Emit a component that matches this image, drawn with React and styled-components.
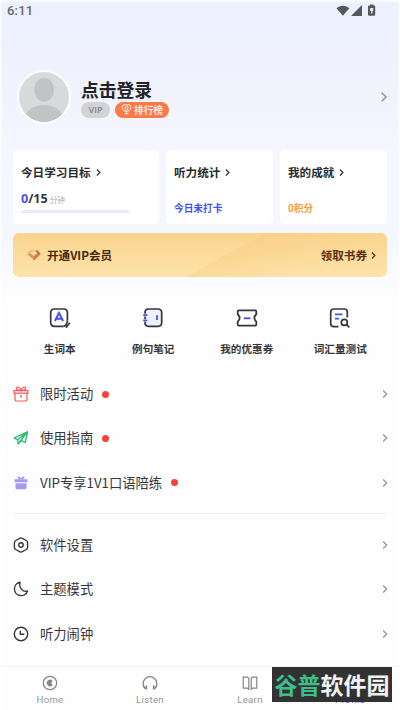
import React from 'react';
import styled, { createGlobalStyle } from 'styled-components';

const cjk = "'Noto Sans CJK SC', sans-serif";

const Chevron = ({ size = 8, color = '#999', weight = 1.4 }) => (
  <svg width={size} height={size} viewBox="0 0 8 8" fill="none" stroke={color} strokeWidth={weight}>
    <path d="M2.2 0.6 5.6 4 2.2 7.4" />
  </svg>
);

const StatusIcons = () => (
  <svg width="42" height="14" viewBox="0 0 42 14" fill="#56585f">
    <path d="M0.5 4.2C3.8 0.8 10 0.8 13.3 4.2L6.9 11.8Z" />
    <path d="M26 1V12H15Z" />
    <path d="M34 1.5V0.6H37.5V1.5H38.2Q39.2 1.5 39.2 2.5V10.6Q39.2 11.8 38 11.8H33.2Q32 11.8 32 10.6V2.5Q32 1.5 33 1.5Z" />
    <path d="M34.2 4H37.2V7H36.4V9.5H35.2V7H34.2Z" fill="#eef0fe" />
  </svg>
);

const AvatarIcon = () => (
  <svg width="50" height="50" viewBox="0 0 50 50">
    <circle cx="25" cy="25" r="25" fill="#d9dadb" />
    <ellipse cx="25.2" cy="17.8" rx="10" ry="11.8" fill="#c2c3c4" />
    <path d="M7 42.3C10 36.5 17 33 25 33s15 3.500 18 9.300A25 25 0 0 1 7 42.300Z" fill="#c2c3c4" />
  </svg>
);

const MedalIcon = () => (
  <svg width="11" height="11" viewBox="0 0 11 11" fill="none" stroke="#fff" strokeWidth="0.9">
    <path d="M2 0.9H9L10.200 3.300 8 7H3L0.800 3.300Z" />
    <circle cx="5.500" cy="3.900" r="1.500" />
    <path d="M5.500 7V9.500M3.500 9.800H7.500" />
  </svg>
);

const DiamondIcon = () => (
  <svg width="14" height="11" viewBox="0 0 14 11">
    <path d="M3.300 0.500H10.700L13.700 4 7 10.500 0.300 4Z" fill="#d99860" />
    <path d="M3.300 0.500H5.800L4.500 4H0.300Z" fill="#eab987" />
    <path d="M8.500 0.500H10.700L13.700 4H9.700Z" fill="#b9723f" />
    <path d="M3.900 3.200 7 6.100 10.100 3.200 8.800 1.200H5.200Z" fill="#fbe0ae" />
    <path d="M7 6.100 10.300 3.500 13.700 4 7 10.500Z" fill="#c9824a" />
  </svg>
);

const WordBookIcon = () => (
  <svg width="24" height="24" viewBox="0 0 24 24" fill="none" stroke="#36373c" strokeWidth="1.7">
    <path d="M15.500 20.300H6.500Q2.700 20.300 2.700 16.500V6.800Q2.700 3 6.500 3H15.600Q19.400 3 19.400 6.800V14.800" />
    <path d="M15.500 20.300Q18.800 19.600 19.400 14.800M18 21.800 21.800 16.800" />
    <path d="M6.900 15 11 6.900 15.100 15M8.700 12.700H13.300" stroke="#4450ef" strokeWidth="2" />
  </svg>
);

const NotesIcon = () => (
  <svg width="24" height="24" viewBox="0 0 24 24" fill="none" stroke="#36373c" strokeWidth="1.7">
    <path d="M4 7.800V6.500Q4 3 7.500 3H17Q20.700 3 20.700 6.700V16.600Q20.700 20.300 17 20.300H7.500Q4 20.300 4 16.800V15.500M4 10.500V13" fill="#edf0fe" />
    <path d="M2.200 9.100H6.300M2.200 14.300H6.300M16 9.200V14" stroke="#4450ef" strokeWidth="1.800" />
  </svg>
);

const CouponIcon = () => (
  <svg width="24" height="24" viewBox="0 0 24 24" fill="none" stroke="#36373c" strokeWidth="1.800">
    <path d="M3.800 4.300H20.200Q21.300 4.300 21.300 5.400V8.300C18.700 10.500 18.700 13.500 21.300 15.700V18.400Q21.300 19.600 20.200 19.600H3.800Q2.700 19.600 2.700 18.400V15.700C5.300 13.500 5.300 10.500 2.700 8.300V5.400Q2.700 4.300 3.800 4.300Z" />
    <path d="M8.800 12.300H15.500" stroke="#4450ef" />
  </svg>
);

const TestIcon = () => (
  <svg width="24" height="24" viewBox="0 0 24 24" fill="none" stroke="#36373c" strokeWidth="1.700">
    <path d="M10.500 20.700H5.800Q2.700 20.700 2.700 17.600V6.100Q2.700 3 5.800 3H16.200Q19.300 3 19.300 6.100V11.500" />
    <circle cx="16.300" cy="16.400" r="3" />
    <path d="M18.500 18.600 21.300 21.300" />
    <path d="M7 8.300H14.500M7 12.700H11" stroke="#4450ef" />
  </svg>
);

const GiftIcon = () => (
  <svg width="16" height="16" viewBox="0 0 16 16" fill="none" stroke="#f5585c" strokeWidth="1.200">
    <path d="M1 4.700H15V7.200H1ZM2 7.200V13.400Q2 15 3.600 15H12.400Q14 15 14 13.400V7.200" />
    <path d="M8 4.500C5.500 4.500 3.100 3.600 3.400 2.100 3.800 0.300 7 0.700 8 4.500 9 0.700 12.200 0.300 12.600 2.100 12.900 3.600 10.500 4.500 8 4.500ZM8 8.800V12" />
  </svg>
);

const PlaneIcon = () => (
  <svg width="16" height="16" viewBox="0 0 16 16" fill="none" stroke="#2dbd78" strokeWidth="1.400" strokeLinejoin="round">
    <path d="M0.900 8.200 14.500 1.800 12.200 12.300 8.400 10.700M0.900 8.200 4.600 9.700 14.500 1.800 5.200 13.800 4.600 9.700M5.200 13.800 8.400 10.700" />
  </svg>
);

const SolidGiftIcon = () => (
  <svg width="16" height="16" viewBox="0 0 16 16" fill="#a799f2">
    <path d="M1.500 4.300H14.500V7.200H1.500ZM2.500 8.200H13.500V13.200Q13.500 14.300 12.400 14.300H3.600Q2.500 14.300 2.500 13.200Z" />
    <path d="M8 4.300C5 4.300 4 3 4.600 2 5.500 1 7.200 2 8 3.500 8.800 2 10.500 1 11.400 2 12 3 11 4.300 8 4.300Z" />
  </svg>
);

const SettingsIcon = () => (
  <svg width="16" height="16" viewBox="0 0 16 16" fill="none" stroke="#36373c" strokeWidth="1.400">
    <path d="M6.600 1.300Q8 0.500 9.400 1.300L13.300 3.500Q14.600 4.300 14.600 5.800V10.200Q14.600 11.700 13.300 12.500L9.400 14.700Q8 15.500 6.600 14.700L2.700 12.500Q1.400 11.700 1.400 10.200V5.800Q1.400 4.300 2.700 3.500Z" />
    <circle cx="8" cy="8" r="2.200" />
  </svg>
);

const MoonIcon = () => (
  <svg width="16" height="16" viewBox="0 0 16 16" fill="none" stroke="#36373c" strokeWidth="1.400" strokeLinejoin="round">
    <path d="M7 1.300A6.700 6.700 0 1 0 14.500 10C10 11.500 5.500 7 7 1.300Z" />
  </svg>
);

const ClockIcon = () => (
  <svg width="16" height="16" viewBox="0 0 16 16" fill="none" stroke="#36373c" strokeWidth="1.400">
    <circle cx="8" cy="8" r="6.700" />
    <path d="M7.300 4.700V8.300H11.300" />
  </svg>
);

const HomeIcon = () => (
  <svg width="16" height="16" viewBox="0 0 16 16" fill="none" stroke="#84858a" strokeWidth="1.200">
    <circle cx="8" cy="8" r="6.700" />
    <path d="M10.600 5.800A3.300 3.300 0 1 0 10.600 10.200L9.300 8Z" fill="#84858a" stroke="none" />
  </svg>
);

const ListenIcon = () => (
  <svg width="16" height="16" viewBox="0 0 16 16" fill="none" stroke="#84858a" strokeWidth="1.300">
    <path d="M3.600 13.700Q1.200 12.500 1.200 8.500A6.800 6.800 0 0 1 14.800 8.500Q14.800 12.500 12.400 13.700" />
    <path d="M4.300 10.500V14.500M11.700 10.500V14.500" strokeWidth="1.700" />
  </svg>
);

const LearnIcon = () => (
  <svg width="16" height="16" viewBox="0 0 16 16" fill="none" stroke="#84858a" strokeWidth="1.200">
    <path d="M1.200 2.200H5.500L6.800 3.200V14.200L5.500 13.200H1.200ZM14.800 2.200H10.500L9.200 3.200V14.200L10.500 13.200H14.800Z" />
  </svg>
);

const ProfileIcon = () => (
  <svg width="16" height="16" viewBox="0 0 16 16" fill="none" stroke="#4450ef" strokeWidth="1.200">
    <circle cx="8" cy="5" r="3.300" />
    <path d="M2 15Q2 9.500 8 9.500T14 15" />
  </svg>
);

const shortcuts = [
  { label: '生词本', icon: <WordBookIcon /> },
  { label: '例句笔记', icon: <NotesIcon /> },
  { label: '我的优惠券', icon: <CouponIcon /> },
  { label: '词汇量测试', icon: <TestIcon /> },
];

const promoRows = [
  { label: '限时活动', icon: <GiftIcon />, dot: true },
  { label: '使用指南', icon: <PlaneIcon />, dot: true },
  { label: 'VIP专享1V1口语陪练', icon: <SolidGiftIcon />, dot: true },
];

const settingRows = [
  { label: '软件设置', icon: <SettingsIcon /> },
  { label: '主题模式', icon: <MoonIcon /> },
  { label: '听力闹钟', icon: <ClockIcon /> },
];

const tabs = [
  { label: 'Home', icon: <HomeIcon /> },
  { label: 'Listen', icon: <ListenIcon /> },
  { label: 'Learn', icon: <LearnIcon /> },
  { label: 'Profile', icon: <ProfileIcon />, active: true },
];

const MenuList = ({ rows }) => (
  <Menu>
    {rows.map((row) => (
      <MenuRow key={row.label}>
        {row.icon}
        <MenuLabel>{row.label}</MenuLabel>
        {row.dot && <Dot />}
        <MenuArrow><Chevron /></MenuArrow>
      </MenuRow>
    ))}
  </Menu>
);

const App = () => (
  <>
    <GlobalStyle />
    <Screen>
      <StatusBar>
        <span>6:11</span>
        <StatusIcons />
      </StatusBar>

      <Profile>
        <Avatar><AvatarIcon /></Avatar>
        <ProfileInfo>
          <ProfileName>点击登录</ProfileName>
          <Badges>
            <VipBadge>VIP</VipBadge>
            <RankBadge><MedalIcon />排行榜</RankBadge>
          </Badges>
        </ProfileInfo>
        <Chevron size={10} />
      </Profile>

      <Stats>
        <StatCard>
          <StatTitle>今日学习目标<Chevron size={7} color="#333" /></StatTitle>
          <Goal><GoalDone>0</GoalDone>/15<GoalUnit>分钟</GoalUnit></Goal>
          <GoalTrack />
        </StatCard>
        <StatCard>
          <StatTitle>听力统计<Chevron size={7} color="#333" /></StatTitle>
          <StatNote $color="#4450ef">今日未打卡</StatNote>
        </StatCard>
        <StatCard>
          <StatTitle>我的成就<Chevron size={7} color="#333" /></StatTitle>
          <StatNote $color="#f79a35">0积分</StatNote>
        </StatCard>
      </Stats>

      <Banner>
        <DiamondIcon />
        <BannerTitle>开通VIP会员</BannerTitle>
        <BannerAction>领取书券<Chevron size={7} color="#5a2e16" /></BannerAction>
      </Banner>

      <Shortcuts>
        {shortcuts.map((item) => (
          <Shortcut key={item.label}>
            {item.icon}
            <ShortcutLabel>{item.label}</ShortcutLabel>
          </Shortcut>
        ))}
      </Shortcuts>

      <MenuList rows={promoRows} />
      <Divider />
      <MenuList rows={settingRows} />

      <TabBar>
        {tabs.map((tab) => (
          <Tab key={tab.label} $active={tab.active}>
            {tab.icon}
            {tab.label}
          </Tab>
        ))}
        <SiteMark><SiteMarkAccent>谷普</SiteMarkAccent>软件园</SiteMark>
      </TabBar>
    </Screen>
  </>
);

const GlobalStyle = createGlobalStyle`
  * {
    box-sizing: border-box;
  }

  body {
    margin: 0;
    background: #fff;
  }

  svg {
    display: block;
    flex: none;
  }
`;

const Screen = styled.div`
  display: flex;
  flex-direction: column;
  width: 400px;
  height: 710px;
  overflow: hidden;
  color: #36373c;
  font-family: ${cjk};
  background: linear-gradient(180deg, #fff 0, #edf0fe 3px, #eef0fe 50px, #f5f6ff 150px, #f5f7ff 240px, #fefeff 300px, #fefefe 320px);
  border-left: 2px solid rgba(255, 255, 255, 0.6);
  border-right: 2px solid rgba(255, 255, 255, 0.6);
`;

const StatusBar = styled.header`
  display: flex;
  justify-content: space-between;
  align-items: center;
  height: 21px;
  padding: 0 20px 0 5px;
  color: #66686f;
  font: 500 13px/21px Roboto, sans-serif;
  letter-spacing: 0.2px;
`;

const Profile = styled.section`
  display: flex;
  align-items: center;
  height: 54px;
  margin-top: 49px;
  padding: 0 9px 0 15px;
`;

const Avatar = styled.div`
  display: flex;
  border: 2px solid #fff;
  border-radius: 50%;
`;

const ProfileInfo = styled.div`
  flex: 1;
  padding-left: 10px;
`;

const ProfileName = styled.div`
  color: #222327;
  font-size: 17.8px;
  font-weight: 700;
  line-height: 24px;
`;

const Badges = styled.div`
  display: flex;
  gap: 5px;
  margin-top: 1px;
`;

const Badge = styled.span`
  display: flex;
  align-items: center;
  justify-content: center;
  height: 16px;
  border-radius: 8px;
`;

const VipBadge = styled(Badge)`
  width: 29px;
  color: #858585;
  background: #d2d3d4;
  font: 600 9px/16px 'Open Sans', sans-serif;
`;

const RankBadge = styled(Badge)`
  gap: 2px;
  width: 54px;
  color: #fff;
  background: #fb7a48;
  font-size: 9.7px;
  font-weight: 500;
`;

const Stats = styled.section`
  display: grid;
  grid-template-columns: 146px 107px 107px;
  gap: 7px;
  margin: 26px 11px 0;
`;

const StatCard = styled.div`
  height: 74px;
  padding: 14px 8px 0;
  border-radius: 5px;
  background: #fff;
`;

const StatTitle = styled.div`
  display: flex;
  align-items: center;
  gap: 4px;
  color: #292a2e;
  font-size: 11.6px;
  font-weight: 700;
  line-height: 17px;
  white-space: nowrap;
`;

const StatNote = styled.div`
  margin-top: 20px;
  color: ${({ $color }) => $color};
  font-size: 9.7px;
  font-weight: 700;
  line-height: 15px;
`;

const Goal = styled.div`
  display: flex;
  align-items: baseline;
  height: 18px;
  margin-top: 9px;
  font: 700 12.5px/18px 'Noto Sans', sans-serif;
`;

const GoalDone = styled.span`
  color: #4450ef;
`;

const GoalUnit = styled.span`
  margin-left: 2px;
  color: #aaa;
  font: 400 7.7px/18px ${cjk};
`;

const GoalTrack = styled.div`
  width: 109px;
  height: 3px;
  margin-top: 2px;
  border-radius: 2px;
  background: #e8eaff;
`;

const Banner = styled.section`
  display: flex;
  align-items: center;
  height: 44px;
  margin: 9px 11px 0;
  padding: 0 10px 0 14px;
  border-radius: 6px;
  color: #5a2e16;
  font-size: 11.6px;
  font-weight: 700;
  background:
    linear-gradient(151deg, transparent 55.5%, rgba(247, 205, 128, 0.4) 55.8%, rgba(255, 226, 165, 0) 80%),
    linear-gradient(180deg, #fad48d, #fee3ab);
`;

const BannerTitle = styled.span`
  flex: 1;
  margin-left: 6px;
  color: #47280f;
`;

const BannerAction = styled.span`
  display: flex;
  align-items: center;
  gap: 3px;
`;

const Shortcuts = styled.section`
  display: grid;
  grid-template-columns: repeat(4, 1fr);
  height: 95px;
  margin: 0 11px;
  padding-top: 29px;
`;

const Shortcut = styled.div`
  display: flex;
  flex-direction: column;
  align-items: center;
`;

const ShortcutLabel = styled.span`
  margin-top: 10px;
  font-size: 10.6px;
  font-weight: 700;
  line-height: 17px;
`;

const Menu = styled.div`
  display: grid;
  grid-auto-rows: 44.3px;
`;

const MenuRow = styled.div`
  display: flex;
  align-items: center;
  padding: 0 9px 0 11px;
`;

const MenuLabel = styled.span`
  margin-left: 11px;
  font-size: 13.3px;
  line-height: 20px;
`;

const Dot = styled.span`
  width: 7px;
  height: 7px;
  margin-left: 9px;
  border-radius: 50%;
  background: #f6423f;
`;

const MenuArrow = styled.span`
  margin-left: auto;
`;

const Divider = styled.div`
  flex: none;
  height: 1px;
  margin: 8px 11px 9px;
  background: #f1f1f2;
`;

const TabBar = styled.nav`
  position: relative;
  display: grid;
  grid-template-columns: repeat(4, 1fr);
  height: 44px;
  margin: auto -2px 0;
  border-top: 1px solid #f1f1f2;
`;

const Tab = styled.div`
  display: flex;
  flex-direction: column;
  align-items: center;
  gap: 2px;
  padding-top: 8px;
  color: ${({ $active }) => ($active ? '#4450ef' : '#96979b')};
  font: 400 9.6px/13px Roboto, sans-serif;
  letter-spacing: 0.3px;
`;

/* site mark lies over the last tab */
const SiteMark = styled.div`
  position: absolute;
  top: 0;
  right: 8px;
  width: 120px;
  height: 35px;
  color: #f3f3f3;
  background: rgba(43, 43, 43, 0.97);
  font-size: 23px;
  font-weight: 700;
  line-height: 34px;
  text-align: center;
  white-space: nowrap;
`;

const SiteMarkAccent = styled.span`
  color: #3fbd8c;
`;

export default App;
